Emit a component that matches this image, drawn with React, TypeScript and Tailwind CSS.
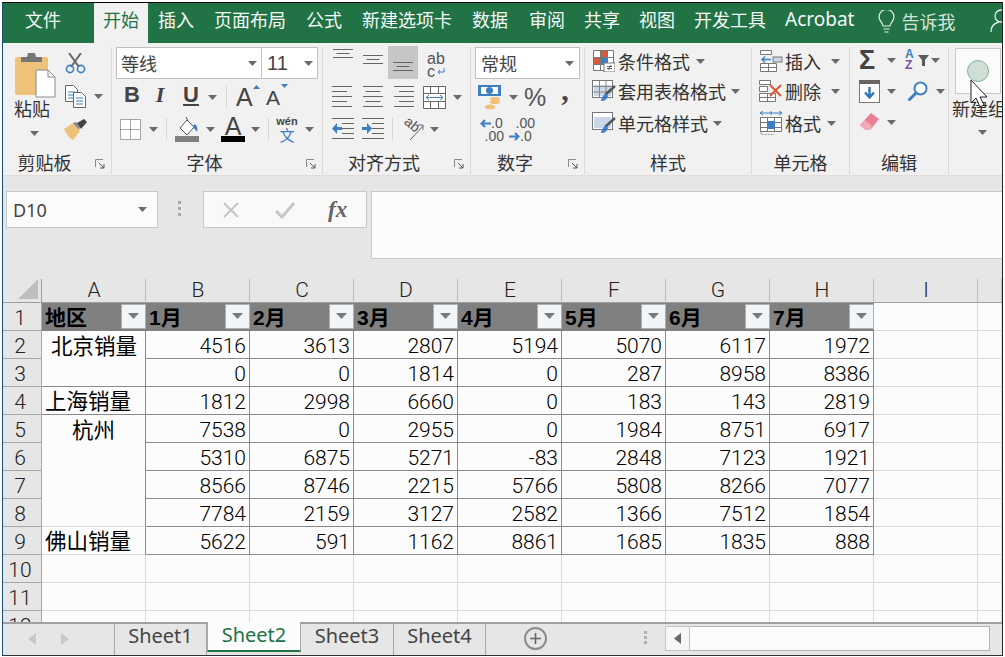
import type { ReactNode } from 'react';

const CJK = "font-['Noto_Sans_CJK_SC','Noto_Sans',sans-serif]";
const LATIN = "font-['Liberation_Sans','Noto_Sans_CJK_SC',sans-serif]";
const THIN = "font-['Roboto','Noto_Sans_CJK_SC',sans-serif] font-light";

const tabs = [
  { label: '插入', className: 'ml-[10px]' },
  { label: '页面布局', className: 'ml-[20px]' },
  { label: '公式', className: 'ml-[20px]' },
  { label: '新建选项卡', className: 'ml-[20px]' },
  { label: '数据', className: 'ml-[20px]' },
  { label: '审阅', className: 'ml-[21px]' },
  { label: '共享', className: 'ml-[19px]' },
  { label: '视图', className: 'ml-[19px]' },
  { label: '开发工具', className: 'ml-[19px]' },
];

const columns = ['A', 'B', 'C', 'D', 'E', 'F', 'G', 'H'];

const months = ['1月', '2月', '3月', '4月', '5月', '6月', '7月'];

const values = [
  [4516, 3613, 2807, 5194, 5070, 6117, 1972],
  [0, 0, 1814, 0, 287, 8958, 8386],
  [1812, 2998, 6660, 0, 183, 143, 2819],
  [7538, 0, 2955, 0, 1984, 8751, 6917],
  [5310, 6875, 5271, -83, 2848, 7123, 1921],
  [8566, 8746, 2215, 5766, 5808, 8266, 7077],
  [7784, 2159, 3127, 2582, 1366, 7512, 1854],
  [5622, 591, 1162, 8861, 1685, 1835, 888],
];

function Caret({ className = '' }: { className?: string }) {
  return (
    <svg width="9" height="5" viewBox="0 0 9 5" className={className}>
      <path d="M0 0h9L4.5 5z" fill="#6a6a6a" />
    </svg>
  );
}

function Launcher({ className }: { className: string }) {
  return (
    <svg width="10" height="10" viewBox="0 0 10 10" className={`absolute top-[9px] ${className}`}>
      <path d="M.5 8V.5H8" fill="none" stroke="#8a8a8a" />
      <path d="M4 4l5 5M9 5v4H5" fill="none" stroke="#555" />
    </svg>
  );
}

function Group({
  label,
  launcher,
  className,
  children,
}: {
  label: string;
  launcher?: boolean;
  className: string;
  children: ReactNode;
}) {
  return (
    <div className={`flex flex-col h-[127px] mt-[4px] border-r border-[#dcd8d4] ${className}`}>
      <div className="h-[103px]">{children}</div>
      <div className={`relative text-center text-[18px] leading-[24px] text-[#333] ${launcher ? 'pr-[25px]' : ''}`}>
        {label}
        {launcher && <Launcher className="right-[6px]" />}
      </div>
    </div>
  );
}

// horizontal rules used by the alignment buttons
function Lines({ ys, widths, align }: { ys: number[]; widths: number[]; align: 'l' | 'c' | 'r' }) {
  return (
    <svg width="22" height="24" viewBox="0 0 22 24">
      {ys.map((y, i) => {
        const w = widths[i % widths.length];
        const x = align === 'l' ? 0 : align === 'r' ? 22 - w : (22 - w) / 2;
        return <rect key={y} x={x} y={y} width={w} height="1" fill="#666" />;
      })}
    </svg>
  );
}

function PasteIcon() {
  return (
    <svg width="42" height="46" viewBox="0 0 42 46">
      <rect x="0" y="5" width="33" height="38" rx="2" fill="#efc27c" />
      <path d="M6 5h6l1-4h7l1 4h6v5H6z" fill="#767676" />
      <path d="M21 18h12l7 7v20H21z" fill="#fff" stroke="#8a8a8a" />
      <path d="M33 18v7h7" fill="none" stroke="#8a8a8a" />
    </svg>
  );
}

function ScissorsIcon() {
  return (
    <svg width="21" height="21" viewBox="0 0 21 21">
      <path d="M4 0l10 14M16 0L6 14" stroke="#666" strokeWidth="2" />
      <circle cx="5" cy="16" r="3.6" fill="none" stroke="#3e7fc1" strokeWidth="1.6" />
      <circle cx="16" cy="16" r="3.6" fill="none" stroke="#3e7fc1" strokeWidth="1.6" />
    </svg>
  );
}

function CopyIcon() {
  return (
    <svg width="21" height="23" viewBox="0 0 21 23">
      <path d="M.5.5h8l4 4v12H.5z" fill="#fff" stroke="#666" />
      <path d="M3 7h7M3 10h7M3 13h5" stroke="#3e7fc1" />
      <path d="M8.5 7.5h8l4 4v11h-12z" fill="#fff" stroke="#666" />
      <path d="M11 13h7M11 16h7M11 19h7" stroke="#3e7fc1" />
    </svg>
  );
}

function BrushIcon() {
  return (
    <svg width="24" height="21" viewBox="0 0 24 21">
      <path d="M0 10l9-6 7 8-7 9C6 20 2 15 0 10z" fill="#efc27c" />
      <path d="M9 4l3-1 4 5-1 3z" fill="#888" />
      <path d="M13 4l7-4 3 3-6 7z" fill="#444" />
    </svg>
  );
}

function BordersIcon() {
  return (
    <svg width="21" height="21" viewBox="0 0 21 21">
      <path
        d="M.5.5h20v20H.5zM10.5.5v20M.5 10.5h20"
        fill="#fff"
        stroke="#555"
        strokeDasharray="1 1"
      />
    </svg>
  );
}

function FillIcon() {
  return (
    <svg width="25" height="25" viewBox="0 0 25 25">
      <path d="M5 11l7-8 7 7-7 8z" fill="#fff" stroke="#555" />
      <path d="M11 0l2 4" stroke="#555" />
      <path d="M19 7c3 1 4 4 3 8-1-2-2-3-4-4z" fill="#3e7fc1" />
      <rect x="0" y="19" width="24" height="6" fill="#7f7f7f" />
    </svg>
  );
}

function CurrencyIcon() {
  return (
    <svg width="24" height="26" viewBox="0 0 24 26">
      <rect x="0" y="1" width="23" height="11" fill="#3e7fc1" />
      <rect x="3" y="3" width="17" height="7" fill="#fff" />
      <circle cx="11.5" cy="6.5" r="3.5" fill="#3e7fc1" />
      <ellipse cx="17" cy="15" rx="5" ry="2" fill="#efc27c" />
      <ellipse cx="17" cy="18" rx="5" ry="2" fill="#efc27c" />
      <ellipse cx="12" cy="23" rx="5" ry="2.5" fill="#efc27c" />
    </svg>
  );
}

function MergeIcon() {
  return (
    <svg width="23" height="23" viewBox="0 0 23 23">
      <path d="M.5.5h22v22H.5zM.5 7.5h22M.5 15.5h22M7.5.5v7M15.5.5v7M7.5 15.5v7M15.5 15.5v7" fill="#fff" stroke="#666" />
      <rect x="1" y="8" width="21" height="7" fill="#fff" />
      <path d="M3 11.5h17M6 9l-3 2.5L6 14M17 9l3 2.5L17 14" fill="none" stroke="#3e7fc1" />
    </svg>
  );
}

function IndentIcon({ flip }: { flip?: boolean }) {
  return (
    <svg width="22" height="22" viewBox="0 0 22 22">
      <path d="M0 .5h22M10 5.5h12M10 10.5h12M10 15.5h12M0 20.5h22" stroke="#666" />
      {flip ? (
        <path d="M0 9h5V5l5 5.500L5 16v-4H0z" fill="#3e7fc1" />
      ) : (
        <path d="M10 9H5V5L0 10.500 5 16v-4h5z" fill="#3e7fc1" />
      )}
    </svg>
  );
}

function OrientIcon() {
  return (
    <svg width="21" height="21" viewBox="0 0 21 21" className="overflow-visible">
      <text x="0" y="9" fontSize="14" fill="#555" transform="rotate(40 7 7)" fontFamily="Liberation Sans">
        ab
      </text>
      <path d="M7 21L20 7M15 6h5v5" fill="none" stroke="#666" />
    </svg>
  );
}

function CondIcon() {
  return (
    <svg width="22" height="22" viewBox="0 0 22 22">
      <path d="M.5.5h20v20H.5zM7.5.5v20M14.5.5v20M.5 7.5h20M.5 14.5h20" fill="#fff" stroke="#777" />
      <rect x="8" y="1" width="6" height="6" fill="#d9583b" />
      <rect x="8" y="8" width="6" height="6" fill="#3e7fc1" />
      <rect x="1" y="8" width="6" height="6" fill="#d9583b" />
      <rect x="11" y="13" width="11" height="9" fill="#fff" stroke="#777" />
      <path d="M14 16.5h5M14 18.5h5M18 15l-3 5" stroke="#444" strokeWidth=".8" />
    </svg>
  );
}

function TableIcon({ fill }: { fill: 'grid' | 'solid' }) {
  return (
    <svg width="24" height="22" viewBox="0 0 24 22">
      <rect x=".5" y=".5" width="20" height="17" fill="#fff" stroke="#777" />
      <rect x="2" y="5" width="17" height="11" fill="#c9d7e8" />
      {fill === 'grid' && <path d="M7.5 1v16M14 1v16M1 6.5h19M1 12h19" stroke="#888" />}
      <path d="M23 6L13 15" stroke="#555" strokeWidth="2.5" />
      <path d="M15 14c-3 0-5 2-6 7 3 0 6-1 7-5z" fill="#3e7fc1" />
    </svg>
  );
}

function CellInsertIcon() {
  return (
    <svg width="23" height="22" viewBox="0 0 23 22">
      <path d="M.5.5h11v4H.5zM.5 13.5h16v8H.5zM8.5 13.5v8M.5 17.5h16" fill="#fff" stroke="#777" />
      <rect x="13" y="7" width="9" height="5" fill="#c9d7e8" stroke="#777" />
      <path d="M11 9.500H2M5 6.500l-3 3 3 3" fill="none" stroke="#3e7fc1" strokeWidth="1.4" />
    </svg>
  );
}

function CellDeleteIcon() {
  return (
    <svg width="24" height="22" viewBox="0 0 24 22">
      <path d="M.5.5h11v4H.5zM.5 13.500h16v8H.5zM8.500 13.500v8M.5 17.500h16M.5 6.500h8v5H.5z" fill="#fff" stroke="#777" />
      <path d="M11 5l11 11M22 5L11 16" stroke="#d9583b" strokeWidth="2" />
    </svg>
  );
}

function CellFormatIcon() {
  return (
    <svg width="22" height="24" viewBox="0 0 22 24">
      <path d="M0 2h22M3 0l-3 2 3 2M19 0l3 2-3 2M11 0v4" fill="none" stroke="#3e7fc1" />
      <path d="M.5 6.500h21v14H.5zM7.500 6.500v14M14.500 6.500v14M.5 11.500h21M.5 16.500h21" fill="#fff" stroke="#777" />
      <rect x="7" y="10" width="8" height="8" fill="#3e7fc1" />
      <path d="M1 21v2.500h13" fill="none" stroke="#999" strokeDasharray="2 1" />
    </svg>
  );
}

function FillDownIcon() {
  return (
    <svg width="21" height="23" viewBox="0 0 21 23">
      <rect x=".5" y=".5" width="20" height="22" fill="#fff" stroke="#777" />
      <rect x="0" y="0" width="21" height="4" fill="#666" />
      <path d="M10.500 7v11M6 12.500l4.500 5 4.500-5" fill="none" stroke="#2e75b6" strokeWidth="2.400" />
    </svg>
  );
}

function SearchIcon() {
  return (
    <svg width="20" height="20" viewBox="0 0 20 20">
      <circle cx="12.500" cy="7.500" r="6" fill="#fff" stroke="#3e7fc1" strokeWidth="2" />
      <path d="M8 12L1.500 18.500" stroke="#3e7fc1" strokeWidth="3" strokeLinecap="round" />
    </svg>
  );
}

function EraserIcon() {
  return (
    <svg width="21" height="21" viewBox="0 0 21 21">
      <path d="M12 1l8 6-8 10H6L1 13z" fill="#ea7f94" />
      <path d="M1 13l5-5 7 6-2 4H6z" fill="#f2a9b6" />
    </svg>
  );
}

function FunnelIcon() {
  return (
    <svg width="11" height="11" viewBox="0 0 11 11">
      <path d="M0 0h11L7 5v6H4V5z" fill="#595959" />
    </svg>
  );
}

function Bulb() {
  return (
    <svg width="17" height="24" viewBox="0 0 17 24" fill="none" stroke="#e8f1ec" strokeWidth="1.200">
      <path d="M5 16c0-3-4-5-4-9a7.500 7.500 0 0 1 15 0c0 4-4 6-4 9z" />
      <path d="M5.500 19h6M6.500 22h4" />
    </svg>
  );
}

function Person() {
  return (
    <svg width="14" height="24" viewBox="0 0 14 24" fill="none" stroke="#e8f1ec" strokeWidth="1.300">
      <circle cx="11" cy="7" r="6" />
      <path d="M1 23c0-6 4-9 8-10" />
    </svg>
  );
}

function FilterButton() {
  return (
    <div className="absolute right-0 top-[1px] w-[25px] h-[25px] bg-[#f2f5f8] border border-[#a9b1ba] flex items-center justify-center pb-[2px]">
      <svg width="11" height="6" viewBox="0 0 11 6">
        <path d="M0 0h11L5.500 6z" fill="#7a7a7a" />
      </svg>
    </div>
  );
}

function ClipboardGroup() {
  return (
    <div className="flex h-full pl-[11px]">
      <div className="w-[46px] flex flex-col">
        <div className="mt-[5px] ml-[1px] h-[42px]">
          <PasteIcon />
        </div>
        <div className="text-[18px] leading-[24px] text-[#333] mt-[2px]">粘贴</div>
        <Caret className="ml-[16px] mt-[11px]" />
      </div>
      <div className="flex flex-col ml-[5px]">
        <div className="mt-[6px] h-[21px]">
          <ScissorsIcon />
        </div>
        <div className="mt-[11px] h-[23px] flex items-center">
          <CopyIcon />
          <Caret className="ml-[8px]" />
        </div>
        <div className="mt-[11px] -ml-[1px]">
          <BrushIcon />
        </div>
      </div>
    </div>
  );
}

function FontGroup() {
  return (
    <div className="flex flex-col pl-[4px]">
      <div className="flex h-[32px] w-[202px] border border-[#c0c0c0] bg-white text-[18px] text-[#444]">
        <div className="w-[145px] border-r border-[#c0c0c0] flex items-center justify-between pl-[4px] pr-[4px]">
          <span>等线</span>
          <Caret />
        </div>
        <div className="flex-1 flex items-center justify-between pl-[5px] pr-[4px]">
          <span className={`${LATIN} text-[20px]`}>11</span>
          <Caret />
        </div>
      </div>
      <div className={`flex items-center h-[26px] mt-[5px] ${LATIN} text-[#444]`}>
        <span className="ml-[6px] w-[20px] text-center font-bold text-[22px] -mt-[5px]">B</span>
        <span className="ml-[8px] w-[20px] text-center font-bold italic text-[22px] font-['Liberation_Serif'] -mt-[5px]">I</span>
        <span className="ml-[11px] w-[20px] text-center font-bold text-[22px] underline -mt-[5px]">U</span>
        <Caret className="ml-[7px]" />
        <div className="ml-[9px] w-px h-[22px] bg-[#d6d6d6]" />
        <div className="relative ml-[9px] w-[22px] text-[25px] leading-none">
          A
          <svg width="7" height="4" className="absolute -right-[2px] top-0">
            <path d="M0 4h7L3.500 0z" fill="#3e7fc1" />
          </svg>
        </div>
        <div className="relative ml-[8px] w-[22px] text-[21px] leading-none">
          A
          <svg width="7" height="4" className="absolute right-0 -top-[3px]">
            <path d="M0 0h7L3.500 4z" fill="#3e7fc1" />
          </svg>
        </div>
      </div>
      <div className={`flex items-center h-[26px] mt-[6px] ${LATIN} text-[#444]`}>
        <div className="ml-[4px]">
          <BordersIcon />
        </div>
        <Caret className="ml-[8px]" />
        <div className="ml-[8px] w-px h-[22px] bg-[#d6d6d6]" />
        <div className="ml-[8px]">
          <FillIcon />
        </div>
        <Caret className="ml-[6px]" />
        <div className="ml-[6px] w-[24px] flex flex-col items-center">
          <span className="text-[25px] leading-[20px] font-normal">A</span>
          <div className="w-[24px] h-[6px] bg-black" />
        </div>
        <Caret className="ml-[6px]" />
        <div className="ml-[8px] w-px h-[22px] bg-[#d6d6d6]" />
        <div className="ml-[7px] w-[22px] flex flex-col items-center leading-none">
          <span className="text-[11px] font-bold">wén</span>
          <span className={`${CJK} text-[15px] text-[#3e7fc1]`}>文</span>
        </div>
        <Caret className="ml-[7px]" />
      </div>
    </div>
  );
}

function AlignGroup() {
  return (
    <div className="flex flex-col pl-[9px]">
      <div className="flex items-start h-[32px]">
        <div className="w-[22px] mt-[1px]">
          <Lines ys={[1, 5, 9]} widths={[20, 13, 20]} align="c" />
        </div>
        <div className="ml-[8px] w-[22px] mt-[1px]">
          <Lines ys={[7, 11, 15]} widths={[20, 13, 20]} align="c" />
        </div>
        <div className="ml-[4px] -mt-[1px] w-[30px] h-[33px] bg-[#c6c6c6] flex items-start justify-center pt-[3px]">
          <Lines ys={[13, 17, 21]} widths={[20, 13, 20]} align="c" />
        </div>
        <div className={`ml-[9px] mt-[5px] ${LATIN} text-[16px] leading-[13px] text-[#555]`}>
          <div>ab</div>
          <div className="flex items-center">
            c
            <svg width="9" height="8" viewBox="0 0 9 8" className="ml-[1px]">
              <path d="M8 0v4H2M4 2L2 4l2 2" fill="none" stroke="#3e7fc1" />
            </svg>
          </div>
        </div>
      </div>
      <div className="flex items-center h-[26px] mt-[5px]">
        <Lines ys={[1, 6, 11, 16, 21]} widths={[20, 15]} align="l" />
        <div className="ml-[8px]">
          <Lines ys={[1, 6, 11, 16, 21]} widths={[20, 15]} align="c" />
        </div>
        <div className="ml-[8px]">
          <Lines ys={[1, 6, 11, 16, 21]} widths={[20, 15]} align="r" />
        </div>
        <div className="ml-[9px]">
          <MergeIcon />
        </div>
        <Caret className="ml-[7px]" />
      </div>
      <div className="flex items-center h-[26px] mt-[6px]">
        <IndentIcon />
        <div className="ml-[8px]">
          <IndentIcon flip />
        </div>
        <div className="ml-[8px] w-px h-[22px] bg-[#d6d6d6]" />
        <div className="ml-[10px]">
          <OrientIcon />
        </div>
        <Caret className="ml-[6px]" />
      </div>
    </div>
  );
}

function NumberGroup() {
  return (
    <div className="flex flex-col pl-[4px]">
      <div className="w-[105px] h-[32px] bg-white border border-[#c0c0c0] flex items-center justify-between pl-[5px] pr-[5px] text-[18px] text-[#444]">
        <span>常规</span>
        <Caret />
      </div>
      <div className="flex items-center h-[26px] mt-[5px]">
        <div className="ml-[3px]">
          <CurrencyIcon />
        </div>
        <Caret className="ml-[7px]" />
        <span className={`ml-[6px] mt-[2px] ${LATIN} text-[25px] text-[#555]`}>%</span>
        <span className={`ml-[15px] font-['Liberation_Serif'] font-bold text-[30px] leading-none -mt-[14px] text-[#444]`}>,</span>
      </div>
      <div className={`flex items-center h-[26px] mt-[7px] ${LATIN} text-[14px] leading-[13px] text-[#555]`}>
        <div className="ml-[5px] w-[24px]">
          <div className="flex items-center">
            <svg width="11" height="9" viewBox="0 0 11 9">
              <path d="M11 4.500H2M5 1L1.500 4.500 5 8" fill="none" stroke="#3e7fc1" strokeWidth="2" />
            </svg>
            <span>.0</span>
          </div>
          <div className="text-right">.00</div>
        </div>
        <div className="ml-[5px] w-[26px]">
          <div className="text-right">.00</div>
          <div className="flex items-center">
            <svg width="11" height="9" viewBox="0 0 11 9">
              <path d="M0 4.500h9M6 1l3.500 3.500L6 8" fill="none" stroke="#3e7fc1" strokeWidth="2" />
            </svg>
            <span>.0</span>
          </div>
        </div>
      </div>
    </div>
  );
}

function ListButton({ icon, label, top, caretGap }: { icon: ReactNode; label: string; top: string; caretGap: string }) {
  return (
    <div className={`flex items-center h-[26px] ${top}`}>
      <div className="w-[24px] flex justify-center">{icon}</div>
      <span className="ml-[2px] text-[18px] leading-none text-[#333]">{label}</span>
      <Caret className={caretGap} />
    </div>
  );
}

function StylesGroup() {
  return (
    <div className="flex flex-col pl-[7px] pt-[1px]">
      <ListButton icon={<CondIcon />} label="条件格式" top="" caretGap="ml-[6px]" />
      <ListButton icon={<TableIcon fill="grid" />} label="套用表格格式" top="mt-[4px]" caretGap="ml-[5px]" />
      <ListButton icon={<TableIcon fill="solid" />} label="单元格样式" top="mt-[6px]" caretGap="ml-[5px]" />
    </div>
  );
}

function CellsGroup() {
  return (
    <div className="flex flex-col pl-[7px] pt-[1px]">
      <ListButton icon={<CellInsertIcon />} label="插入" top="" caretGap="ml-[10px]" />
      <ListButton icon={<CellDeleteIcon />} label="删除" top="mt-[4px]" caretGap="ml-[10px]" />
      <ListButton icon={<CellFormatIcon />} label="格式" top="mt-[6px]" caretGap="ml-[6px]" />
    </div>
  );
}

function EditGroup() {
  return (
    <div className="flex flex-col pl-[9px]">
      <div className="flex items-center h-[26px]">
        <span className={`${LATIN} font-bold text-[27px] leading-none text-[#444] w-[21px]`}>Σ</span>
        <Caret className="ml-[7px]" />
        <div className={`ml-[9px] w-[13px] ${LATIN} font-bold text-[12px] leading-[11px]`}>
          <div className="text-[#3e7fc1]">A</div>
          <div className="text-[#7a4fa3]">Z</div>
        </div>
        <FunnelIcon />
        <Caret className="ml-[2px]" />
      </div>
      <div className="flex items-center h-[26px] mt-[5px]">
        <FillDownIcon />
        <Caret className="ml-[7px]" />
        <div className="ml-[12px]">
          <SearchIcon />
        </div>
        <Caret className="ml-[8px]" />
      </div>
      <div className="flex items-center h-[26px] mt-[5px]">
        <EraserIcon />
        <Caret className="ml-[7px]" />
      </div>
    </div>
  );
}

function NewGroup() {
  return (
    <div className="relative h-full overflow-hidden">
      <div className="ml-[6px] mt-[1px] w-[46px] h-[46px] bg-[#fbfbfb] border border-[#c8c8c8] flex items-center justify-center">
        <div className="w-[22px] h-[22px] rounded-full bg-[#cfdfd6] border border-[#7fb09a]" />
      </div>
      <div className="text-[18px] leading-[24px] text-[#333] whitespace-nowrap ml-[3px] mt-[2px]">新建组</div>
      <Caret className="ml-[29px] mt-[10px]" />
      <svg width="20" height="30" viewBox="0 0 20 30" className="absolute left-[21px] top-[32px]">
        <path d="M1 1v23l5-5 4 9 4-2-4-8h7z" fill="#fff" stroke="#222" />
      </svg>
    </div>
  );
}

function Ribbon() {
  return (
    <div className={`flex h-[133px] bg-[#f1f1f1] border-b border-[#e4dcd6] ${CJK}`}>
      <Group label="剪贴板" launcher className="w-[109px]">
        <ClipboardGroup />
      </Group>
      <Group label="字体" launcher className="w-[211px]">
        <FontGroup />
      </Group>
      <Group label="对齐方式" launcher className="w-[148px]">
        <AlignGroup />
      </Group>
      <Group label="数字" launcher className="w-[114px]">
        <NumberGroup />
      </Group>
      <Group label="样式" className="w-[167px]">
        <StylesGroup />
      </Group>
      <Group label="单元格" className="w-[98px]">
        <CellsGroup />
      </Group>
      <Group label="编辑" className="w-[99px]">
        <EditGroup />
      </Group>
      <div className="w-[53px] mt-[4px]">
        <NewGroup />
      </div>
    </div>
  );
}

function FormulaBar() {
  return (
    <div className="h-[103px] bg-[#e6e6e6] flex items-start pt-[15px] pl-[3px]">
      <div className="w-[152px] h-[37px] bg-[#fbfbfb] border border-[#c8c8c8] flex items-center justify-between pl-[6px] pr-[10px]">
        <span className="font-['Noto_Sans'] text-[18px] text-[#444] pt-[2px]">D10</span>
        <Caret />
      </div>
      <div className="ml-[20px] mt-[10px] flex flex-col gap-[3px]">
        <div className="w-[3px] h-[3px] bg-[#a8a8a8]" />
        <div className="w-[3px] h-[3px] bg-[#a8a8a8]" />
        <div className="w-[3px] h-[3px] bg-[#a8a8a8]" />
      </div>
      <div className="ml-[22px] w-[164px] h-[37px] bg-[#f9f9f9] border border-[#c8c8c8] flex items-center">
        <svg width="18" height="18" viewBox="0 0 18 18" className="ml-[18px]">
          <path d="M2 2l14 14M16 2L2 16" stroke="#c4c4c4" strokeWidth="2" />
        </svg>
        <svg width="20" height="18" viewBox="0 0 20 18" className="ml-[35px]">
          <path d="M1 10l6 6L19 2" fill="none" stroke="#c8c8c8" strokeWidth="3" />
        </svg>
        <span className="ml-[33px] font-['Liberation_Serif'] italic font-bold text-[23px] leading-none text-[#666]">fx</span>
      </div>
      <div className="ml-[4px] flex-1 h-[68px] bg-[#fcfcfc] border border-[#c8c8c8] border-r-0" />
    </div>
  );
}

function Sheet() {
  const gridline = 'border-r border-b border-[#d9d9d9]';
  const cell = 'border-r border-b border-[#8a8a8a]';
  const rowHead = `bg-[#e6e6e6] border-r border-b border-[#a8a8a8] flex items-center justify-center pr-[4px] pt-[4px] text-[21px] text-[#222] ${THIN}`;

  return (
    <div className={`h-[343px] overflow-hidden bg-[#fcfcfc] ${THIN} text-[21px] text-black`}>
      <div className="grid grid-cols-[39px_repeat(9,104px)_1fr] grid-rows-[24px_repeat(12,28px)]">
        {/* Column headers */}
        <div className="bg-[#e6e6e6] border-r border-b border-[#9f9f9f] relative">
          <svg width="20" height="20" className="absolute right-[3px] bottom-[3px]">
            <path d="M0 20L20 0v20z" fill="#bfbfbf" />
          </svg>
        </div>
        {[...columns, 'I', ''].map((c, i) => (
          <div
            key={i}
            className="bg-[#e6e6e6] border-r border-b border-r-[#bdbdbd] border-b-[#9f9f9f] flex items-center justify-center text-[21px] text-[#222] pl-[1px]"
          >
            {c}
          </div>
        ))}

        {/* Row 1 */}
        <div className={rowHead}>1</div>
        <div className={`relative bg-[#808080] ${LATIN} font-bold text-[21px] flex items-center pl-[3px] pt-[2px]`}>
          地区
          <FilterButton />
        </div>
        {months.map((m) => (
          <div key={m} className={`relative bg-[#808080] ${LATIN} font-bold text-[21px] flex items-center pl-[3px] pt-[2px]`}>
            {m}
            <FilterButton />
          </div>
        ))}
        <div className={gridline} />
        <div className={gridline} />

        {/* Rows 2 to 9 */}
        {values.map((row, r) => (
          <Row key={r} index={r} row={row} cell={cell} rowHead={rowHead} gridline={gridline} />
        ))}

        {/* Empty rows */}
        {[10, 11, 12].map((n) => (
          <EmptyRow key={n} n={n} rowHead={rowHead} gridline={gridline} />
        ))}
      </div>
    </div>
  );
}

function RegionCell({ index, cell }: { index: number; cell: string }) {
  const text = `${CJK} font-normal text-[21.5px]`;
  if (index === 0) {
    return <div className={`${cell} ${text} row-span-2 text-center leading-[28px] pl-[1px]`}>北京销量</div>;
  }
  if (index === 2) {
    return <div className={`${cell} ${text} flex items-center pl-[3px]`}>上海销量</div>;
  }
  if (index === 3) {
    return (
      <div className={`row-span-4 border-r border-b border-r-[#8a8a8a] border-b-[#d9d9d9] ${text} text-center leading-[28px]`}>
        杭州
      </div>
    );
  }
  if (index === 7) {
    return <div className={`border-r border-b border-r-[#8a8a8a] border-b-[#d9d9d9] ${text} flex items-center pl-[3px]`}>佛山销量</div>;
  }
  return null;
}

function Row({
  index,
  row,
  cell,
  rowHead,
  gridline,
}: {
  index: number;
  row: number[];
  cell: string;
  rowHead: string;
  gridline: string;
}) {
  return (
    <>
      <div className={rowHead}>{index + 2}</div>
      <RegionCell index={index} cell={cell} />
      {row.map((v, i) => (
        <div key={i} className={`${cell} flex items-center justify-end pr-[3px] pt-[5px]`}>
          {v}
        </div>
      ))}
      <div className={gridline} />
      <div className={gridline} />
    </>
  );
}

function EmptyRow({ n, rowHead, gridline }: { n: number; rowHead: string; gridline: string }) {
  return (
    <>
      <div className={rowHead}>{n}</div>
      {Array.from({ length: 10 }, (_, i) => (
        <div key={i} className={gridline} />
      ))}
    </>
  );
}

function SheetTabs() {
  const tabClass = 'flex items-center justify-center border-r border-[#a8a8a8] pb-[8px]';
  return (
    <div className="flex h-[33px] bg-[#e6e6e6] border-t-2 border-[#a0a0a0] font-['Noto_Sans'] text-[20px] text-[#444]">
      <div className="w-[112px] flex items-center border-r border-[#a8a8a8] pb-[2px]">
        <svg width="8" height="12" viewBox="0 0 8 12" className="ml-[25px]">
          <path d="M8 0v12L0 6z" fill="#c8c8c8" />
        </svg>
        <svg width="8" height="12" viewBox="0 0 8 12" className="ml-[25px]">
          <path d="M0 0v12l8-6z" fill="#c8c8c8" />
        </svg>
      </div>
      <div className={`w-[92px] ${tabClass}`}>Sheet1</div>
      <div className="w-[94px] -mt-[2px] bg-[#fcfcfc] border-x border-[#a8a8a8] border-b-2 border-b-[#217346] flex items-center justify-center text-[#217346] h-[30px] pb-[3px]">
        Sheet2
      </div>
      <div className={`w-[93px] ${tabClass}`}>Sheet3</div>
      <div className={`w-[92px] ${tabClass}`}>Sheet4</div>
      <div className="ml-[38px] w-[23px] h-[23px] mt-[3px] rounded-full border-2 border-[#8c8c8c] flex items-center justify-center">
        <svg width="11" height="11" viewBox="0 0 11 11">
          <path d="M5.500 0v11M0 5.500h11" stroke="#666" strokeWidth="1.600" />
        </svg>
      </div>
      <div className="ml-[97px] mt-[7px] flex flex-col gap-[2px]">
        <div className="w-[3px] h-[3px] bg-[#b0b0b0]" />
        <div className="w-[3px] h-[3px] bg-[#b0b0b0]" />
        <div className="w-[3px] h-[3px] bg-[#b0b0b0]" />
      </div>
      <div className="ml-[18px] mt-[2px] w-[25px] h-[25px] bg-[#f6f6f6] border border-[#c4c4c4] flex items-center justify-center">
        <svg width="7" height="11" viewBox="0 0 7 11">
          <path d="M7 0v11L0 5.500z" fill="#666" />
        </svg>
      </div>
      <div className="mt-[2px] w-[300px] h-[25px] bg-[#fcfcfc] border border-[#b4b4b4] border-l-0" />
    </div>
  );
}

export default function App() {
  return (
    <div className={`w-[1005px] h-[657px] bg-white pt-[2px] pl-[2px] ${CJK}`}>
      <div className="w-[1001px] h-[654px] border-t border-l border-r border-b border-t-black border-l-[#14507f] border-r-[#222] border-b-[#333] overflow-hidden">
        {/* Tab strip */}
        <div className="flex items-start h-[40px] bg-[#217346] text-[18px] leading-[33px] text-[#f4f8f6] whitespace-nowrap">
          <span className="ml-[22px]">文件</span>
          <span className="ml-[33px] h-[40px] px-[9px] bg-[#f1f1f1] text-[#217346]">开始</span>
          {tabs.map((t) => (
            <span key={t.label} className={t.className}>
              {t.label}
            </span>
          ))}
          <span className="ml-[19px] font-['Noto_Sans'] text-[19px]">Acrobat</span>
          <div className="ml-[24px] mt-[7px]">
            <Bulb />
          </div>
          <span className="ml-[6px] mt-[2px] text-[#d5e3db]">告诉我</span>
          <div className="ml-[35px] mt-[6px]">
            <Person />
          </div>
        </div>
        <Ribbon />
        <FormulaBar />
        <Sheet />
        <SheetTabs />
      </div>
    </div>
  );
}
